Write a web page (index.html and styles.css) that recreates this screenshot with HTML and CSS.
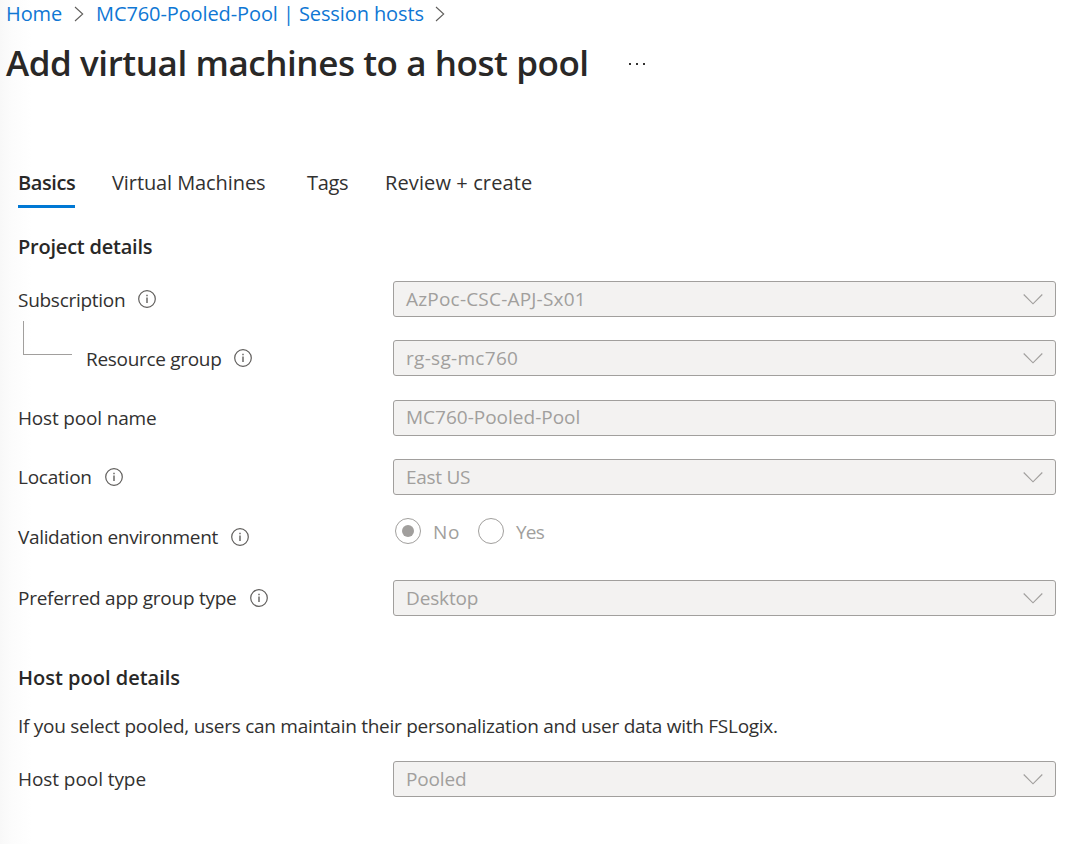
FILE: index.html
```html
<!DOCTYPE html>
<html lang="en">
<head>
<meta charset="utf-8">
<title>Add virtual machines to a host pool</title>
<link rel="stylesheet" href="styles.css">
</head>
<body>
<svg class="defs" aria-hidden="true">
  <symbol id="info" viewBox="0 0 18 18"><circle cx="9" cy="9" r="8.3" fill="none" stroke="currentColor" stroke-width="1.2"/><path d="M9 7.5v5.5M9 4.7v1.5" stroke="currentColor" stroke-width="1.4"/></symbol>
  <symbol id="down" viewBox="0 0 20 12"><path d="M.7 1.5 10 10.8 19.3 1.5" fill="none" stroke="currentColor" stroke-width="1.15"/></symbol>
  <symbol id="right" viewBox="0 0 10 16"><path d="M1 1l7.7 7L1 15" fill="none" stroke="currentColor" stroke-width="1.1"/></symbol>
</svg>
<nav class="breadcrumb">
  <a class="home">Home</a>
  <svg class="right"><use href="#right"/></svg>
  <a class="pool">MC760-Pooled-Pool | Session hosts</a>
  <svg class="right"><use href="#right"/></svg>
</nav>
<header class="title-bar">
  <h1>Add virtual machines to a host pool</h1>
  <svg class="more" viewBox="0 0 18 4"><path d="M1 1h2v2H1zM8 1h2v2H8zM15 1h2v2h-2z" fill="#323130"/></svg>
</header>
<main>
  <div class="tabs">
    <span class="tab active">Basics</span>
    <span class="tab machines">Virtual Machines</span>
    <span class="tab tags">Tags</span>
    <span class="tab review">Review + create</span>
  </div>
  <h2>Project details</h2>
  <div class="row">
    <div class="label low"><span class="subscription">Subscription</span><svg class="info"><use href="#info"/></svg></div>
    <div class="field"><span class="subscription-value">AzPoc-CSC-APJ-Sx01</span><svg class="down"><use href="#down"/></svg></div>
  </div>
  <div class="row">
    <div class="label low"><i class="elbow"></i><span class="group">Resource group</span><svg class="info"><use href="#info"/></svg></div>
    <div class="field"><span class="group-value">rg-sg-mc760</span><svg class="down"><use href="#down"/></svg></div>
  </div>
  <div class="row name-row">
    <div class="label"><span class="host-name">Host pool name</span></div>
    <div class="field plain"><span class="name-value">MC760-Pooled-Pool</span></div>
  </div>
  <div class="row">
    <div class="label"><span class="location">Location</span><svg class="info"><use href="#info"/></svg></div>
    <div class="field"><span class="location-value">East US</span><svg class="down"><use href="#down"/></svg></div>
  </div>
  <div class="row validation-row">
    <div class="label low"><span class="validation">Validation environment</span><svg class="info"><use href="#info"/></svg></div>
    <div class="radios">
      <span class="radio checked"></span><span class="no">No</span>
      <span class="radio"></span><span class="yes">Yes</span>
    </div>
  </div>
  <div class="row">
    <div class="label"><span class="app-type">Preferred app group type</span><svg class="info"><use href="#info"/></svg></div>
    <div class="field"><span class="desktop">Desktop</span><svg class="down"><use href="#down"/></svg></div>
  </div>
  <h2 class="pool-heading">Host pool details</h2>
  <p>If you select pooled, users can maintain their personalization and user data with FSLogix.</p>
  <div class="row">
    <div class="label"><span class="host-type">Host pool type</span></div>
    <div class="field"><span class="pooled">Pooled</span><svg class="down"><use href="#down"/></svg></div>
  </div>
</main>
</body>
</html>
```
FILE: styles.css
```css
* { box-sizing: border-box; }
body {
  margin: 0;
  height: 844px;
  overflow: hidden;
  background: linear-gradient(90deg, #f8f8f8 0, #fcfcfc 12px, #fff 32px);
  color: #323130;
  font-family: "Open Sans", "Noto Sans", sans-serif;
  font-size: 19px;
  font-weight: 400;
  line-height: 26px;
}
span, a, h1, h2, p { white-space: nowrap; }
svg { display: block; flex: none; }
.defs { display: none; }
.breadcrumb { display: flex; align-items: center; height: 28px; padding-left: 6px; font-size: 20px; color: #0f77d4; }
.home { width: 68px; letter-spacing: -.1px; }
.right { width: 10px; height: 16px; color: #605e5c; }
.pool { width: 339px; margin-left: 12px; letter-spacing: -.1px; }
.title-bar { display: flex; align-items: center; height: 70px; padding-left: 6px; }
h1 { width: 622px; margin: 0; color: #292827; font: 600 35px/48px "Open Sans", sans-serif; letter-spacing: -.43px; }
.more { width: 18px; height: 4px; margin-top: 2px; }
main { padding: 72px 24px 0 18px; }
.tabs { display: flex; height: 38px; line-height: 26px; font-size: 20px; }
.tab { height: 38px; }
.active { width: 57px; border-bottom: 3px solid #0078d4; color: #292827; font: 600 20px/26px "Open Sans", sans-serif; letter-spacing: -.4px; }
.machines { width: 195px; margin-left: 37px; letter-spacing: -.09px; }
.tags { width: 78px; letter-spacing: -.33px; }
.review { letter-spacing: .11px; }
h2 { margin: 26px 0 21px; color: #292827; font: 600 20px/26px "Open Sans", sans-serif; letter-spacing: -.22px; }
.row { display: grid; grid-template-columns: 375px 1fr; height: 36px; margin-bottom: 23px; }
.label { display: flex; align-items: center; gap: 13px; height: 35px; }
.low { height: 37px; }
.info { width: 18px; height: 18px; color: #605e5c; }
.low .info { margin-top: -1px; }
.validation-row .info { margin-top: 0; }
.elbow { align-self: flex-start; width: 49px; height: 34px; margin: -19px 1px 0 5px; border: solid #a19f9d; border-width: 0 0 1px 1px; }
.field { display: flex; align-items: center; justify-content: space-between; height: 36px; padding: 0 12px; border: 1px solid #a19f9d; border-radius: 3px; background: #f3f2f1; color: #a19f9d; }
.plain { padding-bottom: 2px; }
.down { width: 20px; height: 12px; }
.name-row { margin-top: 24px; }
.validation-row { margin-bottom: 26px; }
.radios { display: flex; align-items: flex-start; height: 26px; padding-left: 2px; color: #a19f9d; }
.radio { display: grid; place-items: center; width: 26px; height: 26px; border: 1px solid #a19f9d; border-radius: 50%; background: #fff; }
.checked::after { content: ""; width: 12px; height: 12px; border-radius: 50%; background: #a19f9d; }
.no { width: 45px; margin-left: 12px; padding-top: 1px; letter-spacing: .6px; }
.yes { margin-left: 12px; padding-top: 1px; letter-spacing: -.8px; }
.pool-heading { margin: 49px 0 0; letter-spacing: 0; }
p { margin: 22px 0; letter-spacing: -.27px; }
.subscription { letter-spacing: -.28px; }
.group { letter-spacing: -.31px; }
.host-name { letter-spacing: -.17px; }
.location { letter-spacing: -.24px; }
.validation { letter-spacing: -.34px; }
.app-type { letter-spacing: -.26px; }
.host-type { letter-spacing: -.07px; }
.subscription-value { letter-spacing: .2px; }
.group-value { letter-spacing: .3px; }
.name-value { letter-spacing: 0; }
.location-value { letter-spacing: -.3px; }
.desktop, .pooled { letter-spacing: -.15px; }
```
